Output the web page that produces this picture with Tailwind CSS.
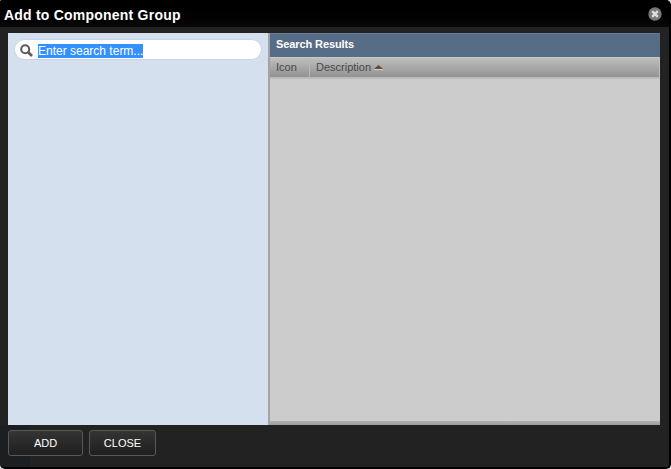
<!DOCTYPE html>
<html lang="en">
<head>
<meta charset="utf-8">
<title>Add to Component Group</title>
<script src="https://cdn.jsdelivr.net/npm/@tailwindcss/browser@4"></script>
</head>
<body class="bg-[#dedede] font-['Liberation_Sans',Arial,sans-serif]">
<div class="w-[671px] h-[469px] flex flex-col overflow-hidden rounded-tl-[2px] rounded-tr-[5px] rounded-b-[5px] bg-[#222222] border-r-2 border-b-2 border-black">
  <header class="h-[27px] shrink-0 flex items-center justify-between pl-[4px] pr-[7px] pt-[3px] bg-linear-to-b from-black to-[#080808]">
    <h1 class="text-white font-bold text-[14px] leading-[20px] tracking-[0.22px] whitespace-nowrap mt-[-1px]">Add to Component Group</h1>
    <button aria-label="Close" class="mt-[-2px]"><svg class="block" width="14" height="14" viewBox="0 0 14 14"><circle cx="7" cy="7" r="6.7" fill="#777"/><path d="M4.2 4.2l5.6 5.6M9.8 4.2l-5.6 5.6" stroke="#ddd" stroke-width="2.4"/></svg></button>
  </header>
  <main class="h-[392px] w-[652px] mt-[6px] ml-[8px] shrink-0 flex">
    <section class="w-[260px] bg-[#d4e0ee] pt-[6px] pl-[6px]">
      <div class="w-[248px] h-[21px] rounded-full bg-white border border-[#c4d5ea] flex items-center pl-[5px]">
        <svg class="shrink-0 mt-[2px]" width="13" height="13" viewBox="0 0 13 13" fill="none" stroke="#5c5c5c"><circle cx="5.2" cy="5.2" r="4" stroke-width="2.1"/><path d="M8 8l4 4" stroke-width="2.6"/></svg>
        <span class="ml-[5px] mt-[3px] w-[105px] h-[14px] bg-[#3390ff] text-white text-[12px] leading-[14px] whitespace-nowrap">Enter search term...</span>
      </div>
    </section>
    <section class="w-[392px] border-l-2 border-[#a3a3a3] bg-[#cccccc] flex flex-col">
      <h2 class="h-[24px] shrink-0 bg-[#566c87] border-t border-[#667d99] text-white font-bold text-[11px] leading-[21px] tracking-[-0.1px] pl-[6px]">Search Results</h2>
      <div class="h-[20px] shrink-0 flex bg-linear-to-b from-[#bebebe] to-[#929292] border-t border-[#c8c8c8] border-r border-r-[#c0c0c0] text-[11px] leading-[19px] text-[#484848]">
        <div class="w-[40px] pl-[6px] border-r border-[#b8b8b8]">Icon</div>
        <div class="pl-[6px] flex"><span class="w-[57px]">Description</span>
          <svg class="ml-[1px] mt-[7px]" width="9" height="5" viewBox="0 0 9 5"><path d="M0 4.5h9" stroke="#ddd0bc"/><path d="M4.5 0L9 4H0z" fill="#65492c"/></svg></div>
      </div>
      <div class="h-[2px] shrink-0 bg-[#bababa]"></div>
      <div class="grow"></div>
      <div class="h-[4px] shrink-0 bg-linear-to-b from-[#b2b2b2] to-[#9e9e9e]"></div>
    </section>
  </main>
  <footer class="flex gap-[6px] pt-[5px] pl-[8px] grow bg-linear-to-r from-[#1c1f21] from-[30px] to-[#222222] to-[30px] text-white text-[11px] leading-[24px]">
    <button class="w-[75px] h-[26px] rounded-[3px] border border-[#585858] bg-linear-to-b from-[#343434] to-[#1f1f1f]">ADD</button>
    <button class="w-[67px] h-[26px] rounded-[3px] border border-[#585858] bg-linear-to-b from-[#343434] to-[#1f1f1f]">CLOSE</button>
  </footer>
</div>
</body>
</html>
